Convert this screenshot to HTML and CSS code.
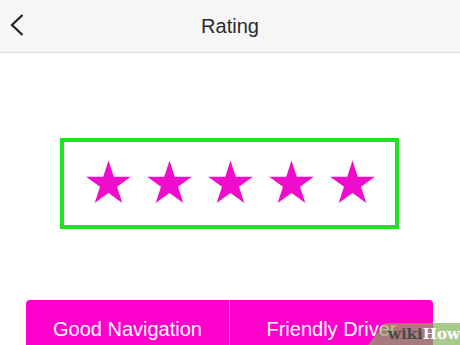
FILE: index.html
```html
<!DOCTYPE html>
<html>
<head>
<meta charset="utf-8">
<link rel="stylesheet" href="styles.css">
</head>
<body>
<div class="screen">
  <header class="nav">
    <svg class="back" width="14" height="22" viewBox="0 0 14 22"><path d="M12.5 1 L2 11 L12.5 21" fill="none" stroke="#222" stroke-width="2.2"/></svg>
    <span class="title">Rating</span>
  </header>
  <main class="content">
    <div class="rating-box">
      <svg class="star" viewBox="0 0 48 44"><polygon points="24,0 29.39,16.58 46.83,16.58 32.72,26.83 38.11,43.42 24,33.17 9.89,43.42 15.28,26.83 1.17,16.58 18.61,16.58"/></svg>
      <svg class="star" viewBox="0 0 48 44"><polygon points="24,0 29.39,16.58 46.83,16.58 32.72,26.83 38.11,43.42 24,33.17 9.89,43.42 15.28,26.83 1.17,16.58 18.61,16.58"/></svg>
      <svg class="star" viewBox="0 0 48 44"><polygon points="24,0 29.39,16.58 46.83,16.58 32.72,26.83 38.11,43.42 24,33.17 9.89,43.42 15.28,26.83 1.17,16.58 18.61,16.58"/></svg>
      <svg class="star" viewBox="0 0 48 44"><polygon points="24,0 29.39,16.58 46.83,16.58 32.72,26.83 38.11,43.42 24,33.17 9.89,43.42 15.28,26.83 1.17,16.58 18.61,16.58"/></svg>
      <svg class="star" viewBox="0 0 48 44"><polygon points="24,0 29.39,16.58 46.83,16.58 32.72,26.83 38.11,43.42 24,33.17 9.89,43.42 15.28,26.83 1.17,16.58 18.61,16.58"/></svg>
    </div>
    <div class="tags">
      <div class="tag">Good Navigation</div>
      <div class="tag">Friendly Driver</div>
    </div>
  </main>
  <div class="watermark"><span class="wiki">wiki</span><span class="how">How</span></div>
</div>
</body>
</html>
```

FILE: styles.css
```css
html, body {
  margin: 0;
  padding: 0;
  background: #fff;
}
.screen {
  position: relative;
  width: 460px;
  height: 345px;
  overflow: hidden;
  font-family: "Liberation Sans", Arial, sans-serif;
}
.nav {
  position: relative;
  height: 52px;
  background: #f6f6f6;
  border-bottom: 1px solid #dcdcdc;
  display: flex;
  align-items: center;
  justify-content: center;
}
.back {
  position: absolute;
  left: 10px;
  top: 14px;
}
.title {
  font-size: 20px;
  color: #2a2a2a;
  margin-top: 1px;
}
.content {
  display: flex;
  flex-direction: column;
}
.rating-box {
  margin: 85px 0 0 60px;
  width: 329px;
  height: 83px;
  border: 4px solid #1be61b;
  display: flex;
  align-items: center;
  justify-content: center;
  gap: 14px;
  padding-left: 2px;
  box-sizing: content-box;
}
.star {
  width: 47px;
  height: 44px;
  fill: #f00ccc;
  margin-top: -3px;
}
.tags {
  margin: 71px 0 0 26px;
  width: 407px;
  height: 60px;
  display: flex;
  background: #ff00cc;
  border-radius: 4px 4px 0 0;
}
.tag {
  flex: 1;
  color: #fff;
  font-size: 20px;
  text-align: center;
  padding-top: 18px;
}
.tag + .tag {
  border-left: 1px solid #f080dd;
}
.watermark {
  position: absolute;
  right: 0;
  bottom: 0;
  width: 92px;
  height: 22px;
  background: rgba(130, 177, 90, 0.69);
  clip-path: polygon(17px 0, 100% 0, 100% 100%, 0 100%);
  display: flex;
  align-items: center;
  padding-left: 20px;
  box-sizing: border-box;
  font-family: "DejaVu Serif", "Liberation Serif", serif;
  font-weight: bold;
  font-size: 15px;
  line-height: 22px;
}
.wiki {
  color: #4a4a4a;
}
.how {
  color: #fff;
}
```
